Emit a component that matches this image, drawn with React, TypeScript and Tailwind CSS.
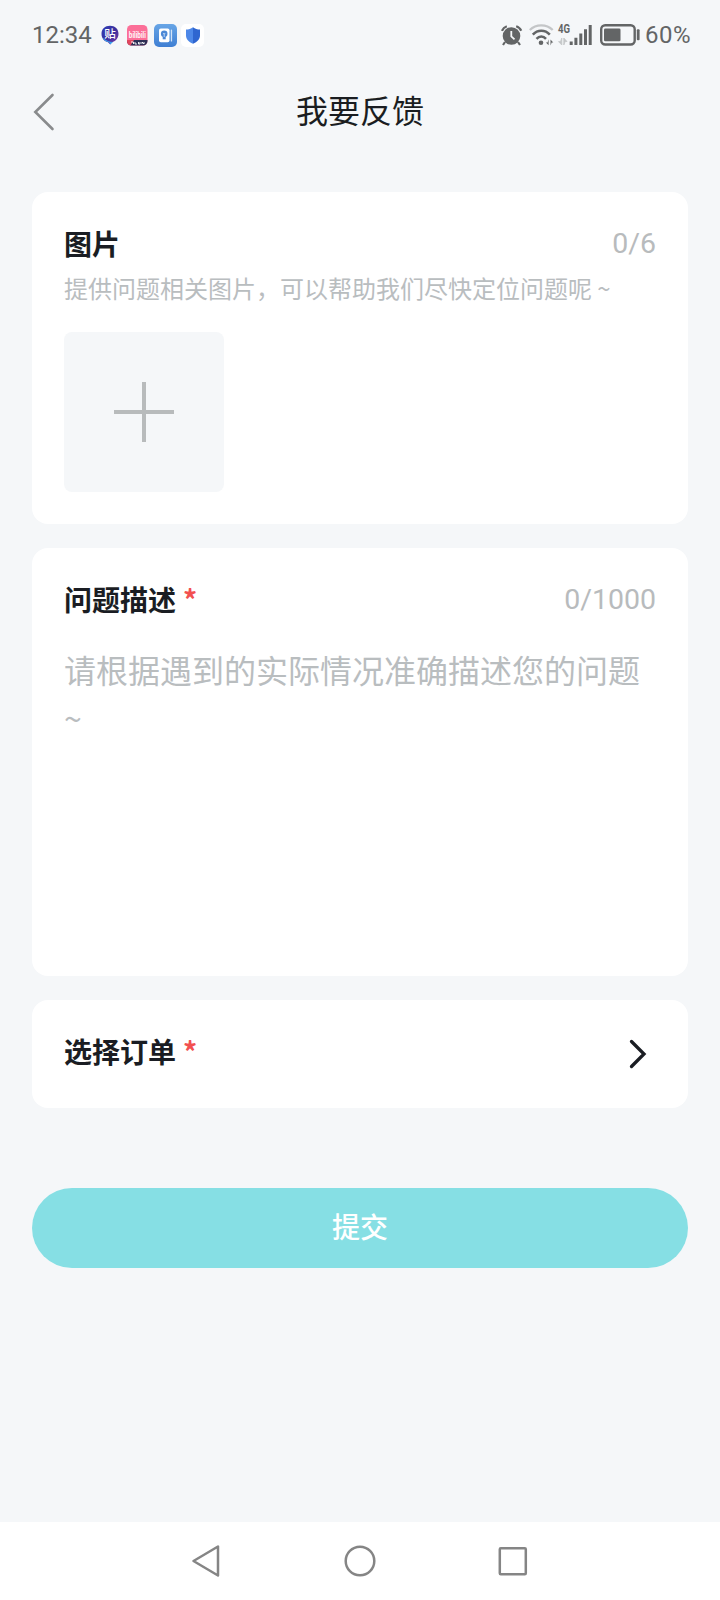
import React from "react";

function AppIcons() {
  return (
    <div className="flex items-center">
      <svg width="18" height="20" viewBox="0 0 18 20">
        <defs>
          <linearGradient id="chat" x1="0" y1="0" x2="1" y2="1">
            <stop offset="0" stopColor="#2f3fb8" />
            <stop offset="0.5" stopColor="#3b2f9c" />
            <stop offset="1" stopColor="#7b3fa8" />
          </linearGradient>
        </defs>
        <path d="M9 0.8C14 0.8 17.5 4 17.5 8.8c0 4.600-3.300 8-6.500 8.400L9.200 19.600 7 17.200C3.500 16.500 0.500 13.500 0.500 8.800 0.500 4 4 0.800 9 0.800z" fill="url(#chat)" />
        <path d="M1.500 12.500Q4 17 8 17L9.200 19.600 12 17Q7 17 1.500 12.500z" fill="#3aa0f0" />
        <text x="9" y="13" textAnchor="middle" fontSize="11.500" fontWeight="500" fill="#fff" fontFamily="Noto Sans CJK SC, sans-serif">贴</text>
      </svg>
      <svg className="ml-2 overflow-visible" width="21" height="21" viewBox="0 0 21 21">
        <rect width="20.500" height="20.500" rx="4.500" fill="#fb6f98" />
        <path d="M0 15h20.500v1a4.500 4.500 0 0 1-4.500 4.500H4.500A4.500 4.500 0 0 1 0 16z" fill="#2c2f55" />
        <path d="M0 15h7l-3.500 5.400A4.500 4.500 0 0 1 0 16z" fill="#e2475f" />
        <text x="10.300" y="12.600" textAnchor="middle" fontSize="9" fontWeight="700" fill="#fff" textLength="17" lengthAdjust="spacingAndGlyphs" fontFamily="Liberation Sans, sans-serif">bilibili</text>
        <path d="M4 17h2.500v2M8 17v2h2M11.500 17v2h1.500v-2M15 19v-2l2 2v-2" stroke="#fff" strokeWidth="0.900" fill="none" />
      </svg>
      <svg className="ml-1.5" width="23" height="23" viewBox="0 0 23 23">
        <defs>
          <linearGradient id="guide" x1="0" y1="0" x2="0" y2="1">
            <stop offset="0" stopColor="#67a5e6" />
            <stop offset="1" stopColor="#3f7fd3" />
          </linearGradient>
        </defs>
        <rect width="23" height="23" rx="5" fill="url(#guide)" />
        <rect x="5" y="4.500" width="10.500" height="13.800" rx="1.800" fill="#fff" />
        <rect x="16.800" y="5.500" width="1.300" height="12" rx="0.600" fill="#d3e4f8" />
        <circle cx="10.200" cy="9.800" r="3.300" fill="#4b88d6" />
        <path d="M8.700 11.500h3v3.800h-3z" fill="#4b88d6" />
        <path d="M10.200 10v3M9.200 9l1 1.200L11.200 9" stroke="#d9e8fa" strokeWidth="0.800" fill="none" />
      </svg>
      <svg className="ml-1" width="24" height="23" viewBox="0 0 24 23">
        <rect width="23" height="23" rx="5" fill="#fff" />
        <path d="M12 3.300c2.100 1.600 4.300 2.200 7 2.300v5.900c0 3.700-2.600 6.300-7 8.300z" fill="#2f66d0" />
        <path d="M12 3.300C9.900 4.900 7.700 5.500 5 5.600v5.900c0 3.700 2.600 6.300 7 8.300z" fill="#4d88e8" />
      </svg>
    </div>
  );
}

function StatusBar() {
  return (
    <div className="flex h-[70px] items-center justify-between pr-[27px] pl-8 text-[#636566]">
      <div className="flex items-center">
        <span className="w-[69px] text-[24px] leading-6">12:34</span>
        <AppIcons />
      </div>
      <div className="flex items-center">
        <svg width="22" height="21" viewBox="0 0 22 21">
          <circle cx="10.500" cy="11" r="8.800" fill="currentColor" />
          <path d="M1 5.800A8 8 0 0 1 5.800 1.300M20.200 5.800A8 8 0 0 0 15.200 1.300" stroke="currentColor" strokeWidth="2.200" fill="none" />
          <path d="M4 17l-2 3M17 17l2 3" stroke="currentColor" strokeWidth="2.200" />
          <path d="M10.300 6v5.300l3.200 3" stroke="#f5f7f9" strokeWidth="1.800" fill="none" />
        </svg>
        <svg className="ml-1.5" width="25" height="22" viewBox="0 0 25 22">
          <path d="M0.800 6C7-0.200 17.500-0.200 23.700 6" stroke="#c4c6c8" strokeWidth="2.300" fill="none" />
          <path d="M3.800 10.600c4.800-5.200 12.300-5.200 17 0" stroke="currentColor" strokeWidth="2.500" fill="none" />
          <path d="M7.500 14.800c2.800-3 6.800-3 9.500 0" stroke="currentColor" strokeWidth="2.500" fill="none" />
          <circle cx="12" cy="18.800" r="2.300" fill="currentColor" />
          <path d="M19.600 15.300v6l-2.700-2.800h1.600zM21.500 21.500v-6l2.800 2.900h-1.600z" fill="currentColor" />
        </svg>
        <svg className="ml-1 overflow-visible" width="34" height="22" viewBox="0 0 34 22">
          <text x="0" y="9" fontSize="12" fontWeight="700" fill="currentColor" textLength="12" lengthAdjust="spacingAndGlyphs" fontFamily="Roboto, sans-serif">4G</text>
          <path d="M3.800 14v7L0.500 17.600h2zM5.800 21v-7L9 17.500H7.200z" fill="#c4c6c8" stroke="#c4c6c8" strokeWidth="0.800" />
          <path d="M13.200 17.500V21M17.900 13.800V21M22.800 9.500V21M27.500 5.300V21M32.200 1V21" stroke="currentColor" strokeWidth="3" />
        </svg>
        <svg className="ml-2" width="40" height="22" viewBox="0 0 40 22">
          <rect x="1.200" y="1.200" width="33.500" height="19.300" rx="4" fill="none" stroke="currentColor" strokeWidth="2.400" />
          <rect x="4" y="4.500" width="16.500" height="12.700" rx="1.300" fill="currentColor" />
          <rect x="36.800" y="5.300" width="2.800" height="11" rx="1" fill="currentColor" />
        </svg>
        <span className="ml-[5px] w-[48px] text-[24px] leading-6 tracking-[0.5px]">60%</span>
      </div>
    </div>
  );
}

function Header() {
  return (
    <header className="grid h-[82px] grid-cols-[1fr_auto_1fr] items-center px-8 pt-px">
      <button aria-label="返回" className="justify-self-start">
        <svg width="24" height="40" viewBox="0 0 24 40">
          <path d="M20.500 3L3.300 20l17.200 17" fill="none" stroke="#898b8d" strokeWidth="2.600" strokeLinecap="round" />
        </svg>
      </button>
      <h1 className="text-[32px] leading-10 text-[#1a1d21]">我要反馈</h1>
    </header>
  );
}

function Heading({ label, required }: { label: string; required?: boolean }) {
  return (
    <h2 className="flex text-[28px] leading-10 font-bold text-[#1a1d23]">
      {label}
      {required && (
        <span className="ml-[7px] font-['Noto_Sans_CJK_SC',sans-serif] font-bold leading-[34px] text-[#f25050]">*</span>
      )}
    </h2>
  );
}

function Counter({ value }: { value: string }) {
  return <span className="text-[28.5px] leading-10 text-[#b8bbbd]">{value}</span>;
}

function NavBar() {
  return (
    <nav className="mt-auto flex h-[78px] items-center justify-center gap-[122px] bg-white pr-px text-[#858585]">
      <svg width="31" height="34" viewBox="0 0 31 34">
        <path d="M27 2.500v29L2.500 17z" fill="none" stroke="currentColor" strokeWidth="2.500" strokeLinejoin="round" />
      </svg>
      <svg width="32" height="32" viewBox="0 0 32 32">
        <circle cx="16" cy="16" r="14.300" fill="none" stroke="currentColor" strokeWidth="2.500" />
      </svg>
      <svg width="31" height="31" viewBox="0 0 31 31">
        <rect x="1.800" y="2.300" width="26" height="26" rx="1" fill="none" stroke="currentColor" strokeWidth="2.500" />
      </svg>
    </nav>
  );
}

export default function App() {
  return (
    <div className="flex h-[1600px] w-[720px] flex-col overflow-hidden bg-[#f5f7f9] font-[Roboto,'Noto_Sans_CJK_SC',sans-serif]">
      <StatusBar />
      <Header />
      <main className="flex flex-col gap-6 px-8 pt-10">
        <section className="h-[332px] rounded-2xl bg-white px-8 pt-8">
          <div className="flex justify-between">
            <div className="pt-0.5">
              <Heading label="图片" />
            </div>
            <Counter value="0/6" />
          </div>
          <p className="font-['Noto_Sans_CJK_SC',sans-serif] text-[24px] leading-[44px] whitespace-nowrap text-[#b9bdbf]">
            提供问题相关图片，可以帮助我们尽快定位问题呢 ~
          </p>
          <button aria-label="添加图片" className="mt-[22px] flex size-40 items-center justify-center rounded-lg bg-[#f5f7f9]">
            <svg width="60" height="60" viewBox="0 0 60 60">
              <path d="M30 0v60M0 30h60" stroke="#b8bbbc" strokeWidth="4" />
            </svg>
          </button>
        </section>
        <section className="h-[428px] rounded-2xl bg-white px-8 pt-8">
          <div className="flex justify-between">
            <div className="pt-0.5">
              <Heading label="问题描述" required />
            </div>
            <Counter value="0/1000" />
          </div>
          <p className="mt-[23px] font-['Noto_Sans_CJK_SC',sans-serif] text-[32px] leading-[48px] text-[#b9bdbf]">请根据遇到的实际情况准确描述您的问题~</p>
        </section>
        <section className="flex h-[108px] items-center justify-between rounded-2xl bg-white px-8">
          <Heading label="选择订单" required />
          <svg className="mr-[9px]" width="18" height="30" viewBox="0 0 18 30">
            <path d="M2.500 2.500L15 15 2.500 27.500" fill="none" stroke="#1a1d23" strokeWidth="3.300" strokeLinecap="round" />
          </svg>
        </section>
        <button className="mt-14 h-20 rounded-full bg-[#86dfe4] pt-px text-[28px] font-medium text-white">提交</button>
      </main>
      <NavBar />
    </div>
  );
}
